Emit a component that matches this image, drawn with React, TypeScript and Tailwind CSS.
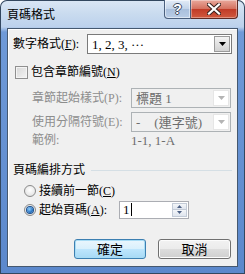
import React from "react"

const bodyFont = { fontFamily: '"Liberation Serif", "Noto Sans CJK TC", serif' }

const Acc = ({ k }: { k: string }) => (
  <>
    (<span className="underline underline-offset-1">{k}</span>)
  </>
)

const DropArrow = ({ disabled }: { disabled?: boolean }) => (
  <svg width="7" height="4" viewBox="0 0 7 4">
    <path d="M0 0h7L3.5 4z" fill={disabled ? "#b4b4b4" : "#000"} />
  </svg>
)

const Combo = ({
  text,
  disabled,
  className,
}: {
  text: React.ReactNode
  disabled?: boolean
  className: string
}) => (
  <div
    className={
      "flex h-[20px] items-stretch border " +
      (disabled
        ? "border-[#adb2b5] bg-[#f0f0f0] text-[#6d6d6d]"
        : "border-[#7a7a7a] bg-white text-black") +
      " " +
      className
    }
  >
    <div className="flex flex-1 items-center whitespace-nowrap pl-[4px] text-[13px] leading-none">
      {text}
    </div>
    <div
      className={
        "m-px flex w-[16px] items-center justify-center border " +
        (disabled
          ? "border-[#e6e6e6] bg-white"
          : "border-[#9a9a9a] bg-[linear-gradient(to_bottom,#f3f3f3,#e2e2e2_50%,#d2d2d2)]")
      }
    >
      <DropArrow disabled={disabled} />
    </div>
  </div>
)

const Radio = ({ checked }: { checked?: boolean }) => (
  <div className="flex h-[12px] w-[12px] items-center justify-center rounded-full border border-[#8a8a8a] bg-[radial-gradient(circle_at_50%_40%,#ffffff,#dcdcdc)]">
    {checked ? (
      <div className="h-[6px] w-[6px] rounded-full bg-[radial-gradient(circle_at_40%_35%,#8fd0ff,#1a66b8_70%)] shadow-[0_0_0_1px_#1c4f8c]" />
    ) : null}
  </div>
)

const Button = ({ label, focused }: { label: string; focused?: boolean }) => (
  <div
    className={
      "flex h-[20px] items-center justify-center rounded-[3px] border text-[13px] leading-none " +
      (focused
        ? "w-[72px] border-[#3c7fb1] shadow-[inset_0_0_0_1px_#a8dcf5] bg-[linear-gradient(to_bottom,#eaf6fd,#d9f0fc_50%,#bee6fd_50%,#a7d9f5)]"
        : "w-[73px] border-[#707070] shadow-[inset_0_0_0_1px_#fcfcfc] bg-[linear-gradient(to_bottom,#f2f2f2,#ebebeb_50%,#dddddd_50%,#cfcfcf)]")
    }
  >
    {label}
  </div>
)

export default function App() {
  return (
    <div className="flex h-[274px] w-[245px] flex-col overflow-hidden rounded-t-[7px] bg-[linear-gradient(to_bottom,#dbe7f5_0px,#c9dbef_14px,#bcd1ec_27px,#6f9ad8_32px,#5b88cc_100%)] shadow-[inset_0_0_0_1px_#33475f]">
      <div className="flex h-[28px] shrink-0 items-start">
        <div
          className="pl-[7px] pt-[6px] text-[12px] leading-[16px] text-black"
          style={{ fontFamily: '"Noto Sans CJK TC", sans-serif' }}
        >
          頁碼格式
        </div>
        <div className="ml-auto mr-[7px] flex">
          <div className="flex h-[19px] w-[27px] items-center justify-center rounded-bl-[4px] border border-t-0 border-[#4a5f7d] bg-[linear-gradient(to_bottom,#e3ecf7,#c2d3e9_50%,#a9bfdc_50%,#b9cde6)] shadow-[inset_0_0_0_1px_rgba(255,255,255,0.5)]">
            <span
              className="text-[14px] font-bold leading-none text-white"
              style={{
                fontFamily: '"Liberation Sans", sans-serif',
                textShadow:
                  "1px 0 #3d4b60, -1px 0 #3d4b60, 0 1px #3d4b60, 0 -1px #3d4b60",
              }}
            >
              ?
            </span>
          </div>
          <div className="flex h-[19px] w-[47px] items-center justify-center rounded-br-[4px] border border-l-0 border-t-0 border-[#5e2a24] bg-[linear-gradient(to_bottom,#e9a99c,#d46f5d_50%,#c03a26_50%,#d05a3f)] shadow-[inset_0_0_0_1px_rgba(255,255,255,0.35)]">
            <svg width="14" height="12" viewBox="0 0 14 12">
              <path
                d="M2 1.5l10 9M12 1.5l-10 9"
                stroke="#3b2420"
                strokeWidth="4.2"
                strokeLinecap="square"
              />
              <path
                d="M2 1.5l10 9M12 1.5l-10 9"
                stroke="#fff"
                strokeWidth="2.2"
                strokeLinecap="square"
              />
            </svg>
          </div>
        </div>
      </div>

      <div
        className="mx-[7px] mb-[7px] flex flex-1 flex-col whitespace-nowrap border border-[#45586f] bg-[#f0f0f0] pl-[5px] pr-[5px] pt-[5px] text-[12px] leading-none text-black shadow-[inset_1px_1px_0_#ffffff]"
        style={bodyFont}
      >
        <div className="flex h-[20px] items-center">
          <div className="w-[74px]">
            數字格式<Acc k="F" />:
          </div>
          <Combo className="flex-1" text="1, 2, 3, ···" />
        </div>

        <div className="mt-[8px] flex h-[20px] items-center pl-[2px]">
          <div className="h-[13px] w-[13px] border border-[#8f8f8f] bg-[linear-gradient(135deg,#d6d6d6,#f4f4f4)] shadow-[inset_0_0_0_1px_#f4f4f4]" />
          <div className="ml-[3px]">
            包含章節編號<Acc k="N" />
          </div>
        </div>

        <div className="mt-[6px] flex h-[20px] items-center text-[#8d8d8d]">
          <div className="w-[118px] pl-[19px]">章節起始樣式(P):</div>
          <Combo disabled className="w-[100px]" text="標題 1" />
        </div>

        <div className="mt-[4px] flex h-[20px] items-center text-[#8d8d8d]">
          <div className="w-[118px] pl-[19px]">使用分隔符號(E):</div>
          <Combo
            disabled
            className="w-[100px]"
            text={
              <>
                -<span className="ml-[14px]">(連字號)</span>
              </>
            }
          />
        </div>

        <div className="flex h-[16px] items-center text-[#8d8d8d]">
          <div className="w-[118px] pl-[19px]">範例:</div>
          <div className="text-[13px] text-[#6d6d6d]">1-1, 1-A</div>
        </div>

        <div className="mt-[14px] flex h-[16px] items-center">
          <div>頁碼編排方式</div>
          <div className="ml-[6px] h-px flex-1 bg-[#d5dfe5]" />
        </div>

        <div className="mt-[4px] flex h-[18px] items-center pl-[11px]">
          <Radio />
          <div className="ml-[3px]">
            接續前一節<Acc k="C" />
          </div>
        </div>

        <div className="flex h-[19px] items-center pl-[11px]">
          <Radio checked />
          <div className="ml-[3px] w-[80px]">
            起始頁碼<Acc k="A" />:
          </div>
          <div className="flex h-[18px] w-[70px] items-stretch border border-[#abadb3] bg-white">
            <div className="flex flex-1 items-center pl-[3px] text-[13px]">
              1<span className="ml-px inline-block h-[13px] w-px bg-black" />
            </div>
            <div className="m-px flex w-[15px] flex-col">
              <div className="flex flex-1 items-center justify-center border border-[#c3cbd7] bg-[linear-gradient(to_bottom,#f4f6f9,#dfe5ee)]">
                <svg width="5" height="3" viewBox="0 0 5 3">
                  <path d="M0 3h5L2.5 0z" fill="#4d6185" />
                </svg>
              </div>
              <div className="flex flex-1 items-center justify-center border border-t-0 border-[#c3cbd7] bg-[linear-gradient(to_bottom,#f4f6f9,#dfe5ee)]">
                <svg width="5" height="3" viewBox="0 0 5 3">
                  <path d="M0 0h5L2.5 3z" fill="#4d6185" />
                </svg>
              </div>
            </div>
          </div>
        </div>

        <div className="mt-[20px] flex justify-end gap-[12px] pr-[1px]">
          <Button focused label="確定" />
          <Button label="取消" />
        </div>
      </div>
    </div>
  )
}
